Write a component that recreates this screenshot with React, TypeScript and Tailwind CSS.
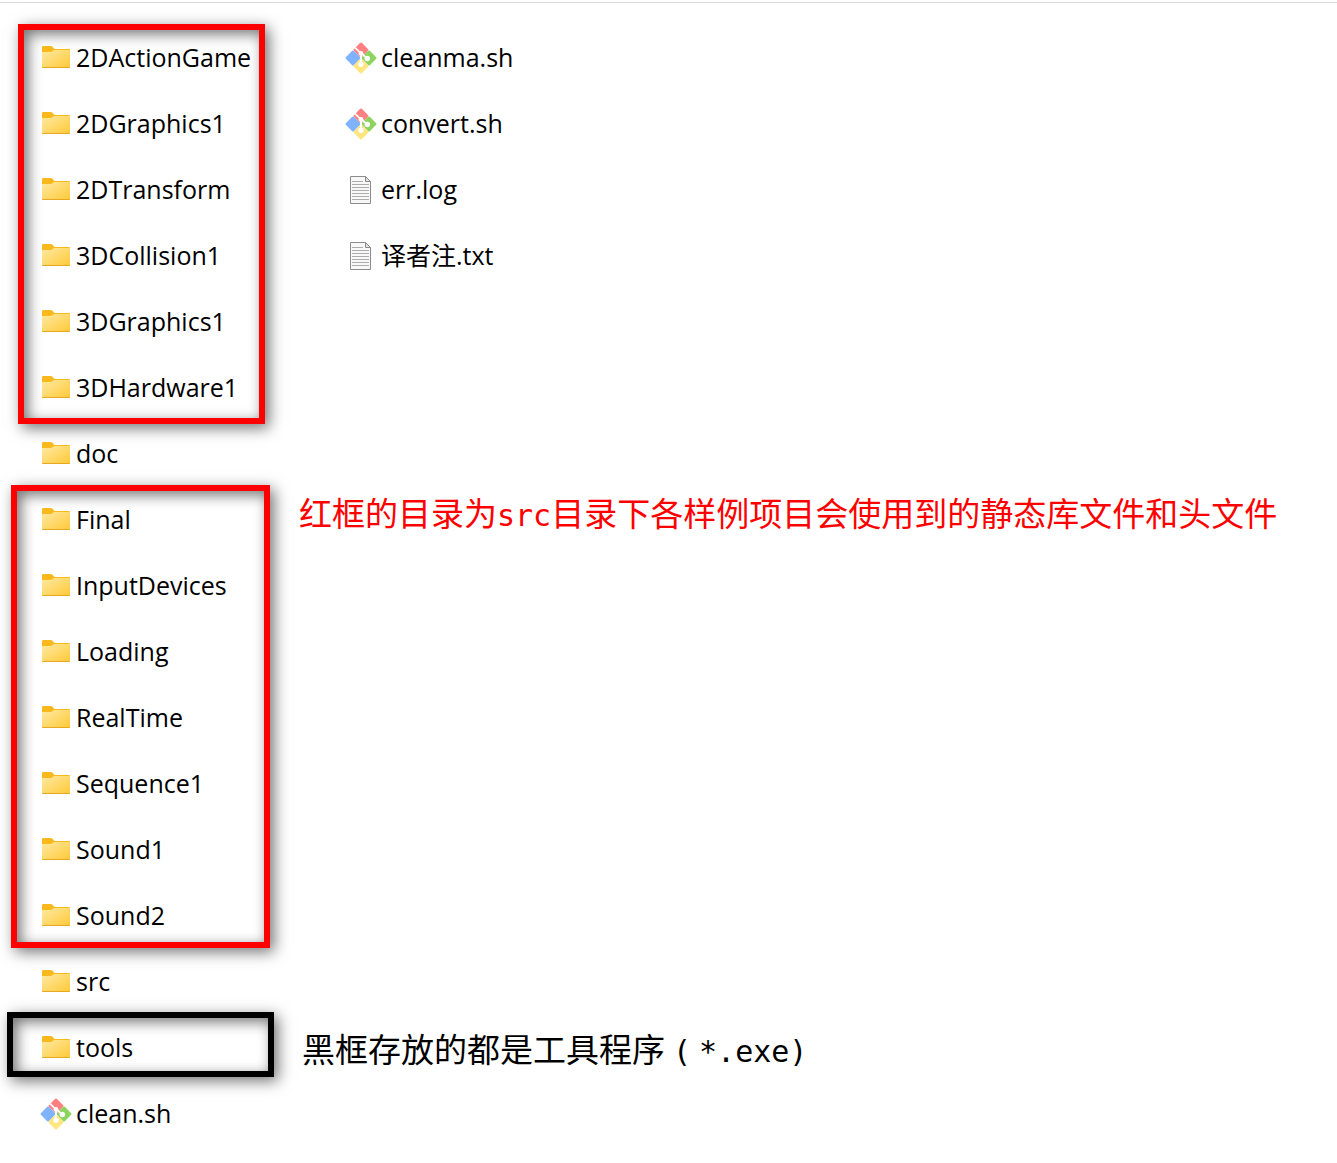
import type { ReactNode } from "react";

function FolderIcon() {
  return (
    <svg viewBox="0 0 32 32" className="size-8 shrink-0" aria-hidden="true">
      <defs>
        <linearGradient id="folder-body" x1="0" y1="0" x2="1" y2="1">
          <stop offset="0" stopColor="#ffe9a2" />
          <stop offset="1" stopColor="#ffc937" />
        </linearGradient>
      </defs>
      <path d="M2 5.200A1.200 1.200 0 0 1 3.200 4h7.600q.8 0 1.400.6L14.500 7H29a1 1 0 0 1 1 1v5H2z" fill="#f9b91c" />
      <path d="M2 10h8.600q1 0 1.700-.7l.9-.8q.6-.5 1.400-.5H30v17a1 1 0 0 1-1 1H3a1 1 0 0 1-1-1z" fill="url(#folder-body)" />
      <path d="M2 24.600a1 1 0 0 0 1 .5h26a1 1 0 0 0 1-.5v.4a1 1 0 0 1-1 1H3a1 1 0 0 1-1-1z" fill="#e9a820" />
    </svg>
  );
}

function GitIcon() {
  return (
    <svg viewBox="0 0 32 32" className="size-8 shrink-0" aria-hidden="true">
      <g strokeWidth="3" strokeLinejoin="round">
        <path d="M16 2.100 21.900 8 16 13.900 10.100 8z" fill="#ff8080" stroke="#ff8080" />
        <path d="M8 10.100 13.900 16 8 21.900 2.100 16z" fill="#80b3ff" stroke="#80b3ff" />
        <path d="M24 10.100 29.900 16 24 21.900 18.100 16z" fill="#8dd35f" stroke="#8dd35f" />
        <path d="M16 18.100 21.900 24 16 29.900 10.100 24z" fill="#ffe680" stroke="#ffe680" />
      </g>
      <path d="M10 5.600 16 11.600V22M16 11l6.300 5.600" fill="none" stroke="#fff" strokeWidth="1.800" />
      <circle cx="16" cy="11.400" r="2.400" fill="#fff" />
      <circle cx="22.300" cy="16.500" r="2.700" fill="#fff" />
      <circle cx="16" cy="22.300" r="2.700" fill="#fff" />
    </svg>
  );
}

function TextIcon() {
  return (
    <svg viewBox="0 0 32 32" className="size-8 shrink-0" aria-hidden="true">
      <path d="M5.500 2.500h15l5 5v22h-20z" fill="#f8f8f8" stroke="#8c8c8c" />
      <path d="M20.500 2.500v5h5z" fill="#e2e2e2" stroke="#8c8c8c" />
      <path
        d="M7 7.500h11M7 10.500h17M7 13.500h17M7 16.500h17M7 19.500h17M7 22.500h17M7 25.500h17"
        stroke="#acacac"
      />
    </svg>
  );
}

const icons = { folder: FolderIcon, git: GitIcon, text: TextIcon };

type Entry = { name: string; kind: keyof typeof icons };

const folders = (...names: string[]): Entry[] => names.map((name) => ({ name, kind: "folder" }));

function FileList({ entries }: { entries: Entry[] }) {
  return (
    <ul className="flex flex-col gap-[30px]">
      {entries.map(({ name, kind }) => {
        const Icon = icons[kind];
        return (
          <li key={name} className="flex h-9 items-center gap-1 text-[25px] leading-8 whitespace-nowrap">
            <Icon />
            <span className="pb-0.5">{name}</span>
          </li>
        );
      })}
    </ul>
  );
}

function Frame({ className, children }: { className: string; children: ReactNode }) {
  return (
    <div
      className={`shrink-0 border-[6px] shadow-[4px_4px_14px_rgba(0,0,0,0.55),inset_4px_4px_14px_rgba(0,0,0,0.55)] ${className}`}
    >
      {children}
    </div>
  );
}

function Mono({ className = "", children }: { className?: string; children: ReactNode }) {
  return (
    <span className={`font-['DejaVu_Sans_Mono',monospace] text-[30px] leading-none ${className}`}>{children}</span>
  );
}

export default function App() {
  return (
    <main className="min-h-screen bg-white pt-[2px] font-['Open_Sans','Noto_Sans_CJK_SC',sans-serif] text-black">
      <div className="mb-[21px] h-px bg-[#d9d9d9]" />

      <section className="flex items-start pl-[18px]">
        <Frame className="w-[247px] border-[#ff0000] pt-[10px] pb-3 pl-4">
          <FileList
            entries={folders("2DActionGame", "2DGraphics1", "2DTransform", "3DCollision1", "3DGraphics1", "3DHardware1")}
          />
        </Frame>
        <div className="pt-4 pl-20">
          <FileList
            entries={[
              { name: "cleanma.sh", kind: "git" },
              { name: "convert.sh", kind: "git" },
              { name: "err.log", kind: "text" },
              { name: "译者注.txt", kind: "text" },
            ]}
          />
        </div>
      </section>

      <div className="pt-3 pb-[13px] pl-10">
        <FileList entries={folders("doc")} />
      </div>

      <section className="flex items-start pl-[11px]">
        <Frame className="w-[259px] border-[#ff0000] pt-[11px] pb-2 pl-[23px]">
          <FileList entries={folders("Final", "InputDevices", "Loading", "RealTime", "Sequence1", "Sound1", "Sound2")} />
        </Frame>
        <p className="pt-[3px] pl-[29px] font-['Noto_Sans_CJK_SC',sans-serif] text-[33px] leading-[48px] text-[#ff0000]">
          红框的目录为<Mono>src</Mono>目录下各样例项目会使用到的静态库文件和头文件
        </p>
      </section>

      <div className="pt-4 pb-3 pl-10">
        <FileList entries={folders("src")} />
      </div>

      <section className="flex items-start pl-[7px]">
        <Frame className="w-[267px] border-black pt-3 pb-[5px] pl-[27px]">
          <FileList entries={folders("tools")} />
        </Frame>
        <p className="pt-3 pl-7 font-['Noto_Sans_CJK_SC',sans-serif] text-[33px] leading-[48px]">
          黑框存放的都是工具程序<Mono className="px-2">(</Mono>
          <Mono>*.exe)</Mono>
        </p>
      </section>

      <div className="pt-[19px] pl-10">
        <FileList entries={[{ name: "clean.sh", kind: "git" }]} />
      </div>
    </main>
  );
}
